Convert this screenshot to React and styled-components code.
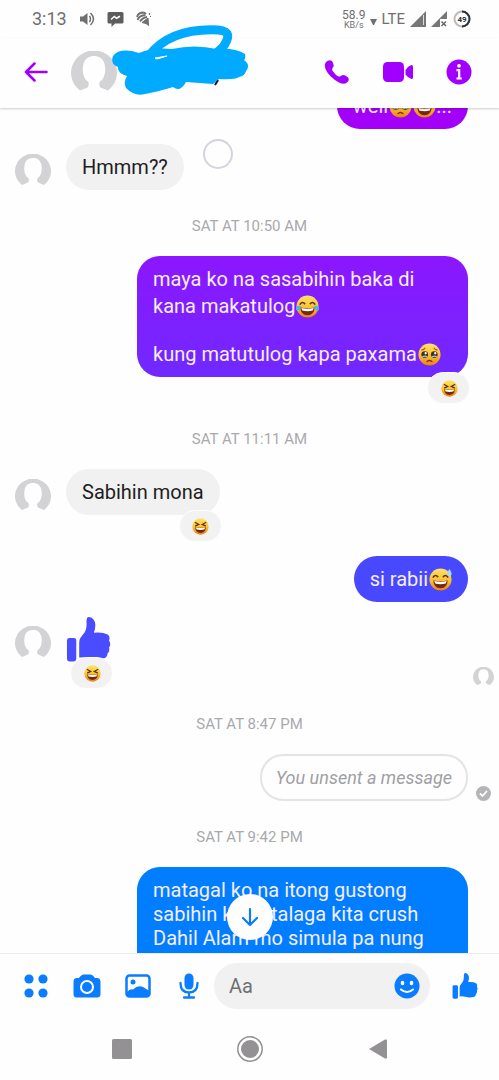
import styled, { createGlobalStyle } from "styled-components";

const GlobalStyle = createGlobalStyle`
  * {
    box-sizing: border-box;
  }

  body {
    margin: 0;
    background: #fefefe;
    font-family: Roboto, "Liberation Sans", sans-serif;
  }

  svg {
    display: block;
    flex-shrink: 0;
  }
`;

const Screen = styled.div`
  position: relative;
  display: flex;
  flex-direction: column;
  height: 100vh;
  overflow: hidden;
  background: #fefefe;
`;

const StatusBar = styled.div`
  display: flex;
  align-items: center;
  justify-content: space-between;
  height: 38px;
  padding: 0 28px 0 32px;
  color: #707070;
`;

const StatusGroup = styled.div`
  display: flex;
  align-items: center;
  gap: ${({ $gap }) => $gap}px;
`;

const Clock = styled.span`
  font-size: 18px;
  line-height: 20px;
`;

const Network = styled.span`
  font-size: 15px;
  line-height: 20px;
`;

const Speed = styled.div`
  display: flex;
  flex-direction: column;
  align-items: center;
  font-size: 12px;
  line-height: 12px;
`;

const SpeedUnit = styled.span`
  font-size: 9px;
  line-height: 8px;
`;

const Header = styled.header`
  position: relative;
  z-index: 2;
  display: flex;
  align-items: center;
  height: 70px;
  padding: 0 10px 2px;
  color: #a100ff;
  background: #fefefe;
  box-shadow: 0 1px 2px rgba(0, 0, 0, 0.2);
`;

const HeaderAvatar = styled.div`
  flex: 1;
  padding: 4px 0 0 10px;
`;

const IconButton = styled.button`
  display: flex;
  align-items: center;
  justify-content: center;
  width: ${({ $width }) => $width}px;
  height: 46px;
  padding: 0;
  border: 0;
  color: inherit;
  background: none;
  cursor: pointer;
`;

const Scribble = styled.svg`
  position: absolute;
  top: -14px;
  left: 111px;
`;

const Chat = styled.main`
  position: relative;
  flex: 1;
  min-height: 0;
  overflow: hidden;
`;

const Thread = styled.div`
  display: flex;
  flex-direction: column;
  gap: 15px;
  margin-top: -25px;
`;

const Group = styled.section`
  display: flex;
  flex-direction: column;
  gap: 15px;
`;

const DateLine = styled.time`
  padding: 11px 0 5px;
  color: #a9a9ac;
  font-size: 15px;
  line-height: 20px;
  text-align: center;
`;

const Row = styled.div`
  position: relative;
  display: flex;
  align-items: flex-end;
  justify-content: ${({ $mine }) => ($mine ? "flex-end" : "flex-start")};
  gap: 15px;
  padding: 0 31px ${({ $reacted }) => ($reacted ? 26 : 0)}px 15px;
`;

const Content = styled.div`
  position: relative;
  max-width: 331px;
`;

const Bubble = styled.div`
  padding: 11px 16px;
  border-radius: 23px;
  color: ${({ $fill }) => ($fill ? "#f6edff" : "#1e1e1e")};
  background: ${({ $fill }) => $fill || "#f1f1f1"};
  font-size: 20px;
  line-height: 24px;
  white-space: pre-line;
`;

const LongBubble = styled(Bubble)`
  min-height: 120px;
`;

const UnsentBubble = styled(Bubble)`
  border: 2px solid #e4e4e4;
  padding: 10px 14px;
  color: #a0a0a3;
  background: none;
  font-size: 18px;
  line-height: 23px;
  font-style: italic;
`;

const EmojiSvg = styled.svg`
  display: inline-block;
  margin: ${({ $tall }) => ($tall ? 4 : 0)}px 0 0 1px;
  vertical-align: -5px;
`;

const Reaction = styled.div`
  position: absolute;
  right: -2px;
  bottom: -27px;
  display: flex;
  align-items: center;
  justify-content: center;
  width: 43px;
  height: 32px;
  border: 1px solid #fefefe;
  border-radius: 16px;
  background: #f2f2f2;
`;

const Receipt = styled.div`
  position: absolute;
  right: ${({ $right }) => $right}px;
  bottom: 0;
`;

const ScrollButton = styled.button`
  position: absolute;
  bottom: 13px;
  left: 50%;
  display: flex;
  align-items: center;
  justify-content: center;
  width: 46px;
  height: 46px;
  padding: 0;
  border: 0;
  border-radius: 50%;
  color: #0a7cf5;
  background: #fefefe;
  transform: translateX(-50%);
`;

const TouchRing = styled.div`
  position: absolute;
  top: 31px;
  left: 203px;
  width: 30px;
  height: 30px;
  border: 2px solid #d3d3e2;
  border-radius: 50%;
`;

const Composer = styled.form`
  display: flex;
  align-items: center;
  padding: 9px 0 11px 10px;
  border-top: 1px solid #ececec;
  color: #0a7cff;
`;

const Field = styled.label`
  display: flex;
  flex: 1;
  align-items: center;
  min-width: 0;
  height: 46px;
  border-radius: 23px;
  background: #f1f1f2;
`;

const TextInput = styled.input`
  flex: 1;
  min-width: 0;
  padding: 0 0 0 15px;
  border: 0;
  outline: 0;
  color: #1e1e1e;
  background: none;
  font: 20px Roboto, sans-serif;

  &::placeholder {
    color: #707072;
    opacity: 1;
  }
`;

const SystemNav = styled.nav`
  display: grid;
  grid-template-columns: repeat(3, 128px);
  justify-content: center;
  padding: 6px 0 8px;
  color: #939193;
`;

const PersonIcon = ({ size = 36 }) => (
  <svg width={size} height={size} viewBox="0 0 36 36" fill="#d3d3d5">
    <path d="M7 31A18 17.500 0 1 1 29 31L23 28.500Q20.500 24.500 24.500 22.500C27 19 27.200 14 26.200 10C25 5.500 21.500 4 18 4C14.500 4 11 5.500 9.800 10C8.800 14 9 19 11.500 22.500Q15.500 24.500 13 28.500Z" />
  </svg>
);

const ThumbIcon = ({ size = 45, fill = "currentColor" }) => (
  <svg width={size} height={size} viewBox="0 0 45 46" fill={fill}>
    <rect x="0.500" y="21.500" width="9.500" height="24" rx="2.500" />
    <path d="M13 26Q13 22 16 19Q21 14 20.500 6Q20 0 23 0Q29 1 29.500 8Q29.500 13 28 16Q37 15 42 18Q45 20 43.500 24Q46 28 43.500 31Q44.500 35 42 37Q42 41 38 42.500Q30 44 23 42Q18 41 13 41.500Z" />
  </svg>
);

// Round faces used both inline in messages and in reaction pills.
const Emoji = ({ kind, size = 23, tall }) => {
  const id = `face-${kind}`;
  return (
    <EmojiSvg $tall={tall} width={size} height={size} viewBox="0 0 24 24" role="img" aria-label={kind}>
      <defs>
        <linearGradient id={id} x1="0" y1="0" x2="0" y2="1">
          <stop offset="0" stopColor="#ffe36b" />
          <stop offset="0.55" stopColor="#fbc02f" />
          <stop offset="1" stopColor="#ec7d17" />
        </linearGradient>
      </defs>
      <circle cx="12" cy="12" r="11.500" fill={`url(#${id})`} />
      {kind === "pleading" && (
        <>
          <path d="M3.500 7.500Q6 7 7.500 5M20.500 7.500Q18 7 16.500 5" fill="none" stroke="#a35b18" strokeWidth="1.200" />
          <circle cx="7" cy="12" r="3.500" fill="#3c3028" />
          <circle cx="17" cy="12" r="3.500" fill="#3c3028" />
          <path d="M4.500 14.500Q7 13 9.500 14.500M14.500 14.500Q17 13 19.500 14.500" fill="none" stroke="#a8c7d4" strokeWidth="1.300" />
          <circle cx="8" cy="10.700" r="1.200" fill="#fff" />
          <circle cx="18" cy="10.700" r="1.200" fill="#fff" />
          <path d="M9 19.500Q12 16.800 15 19.500" fill="none" stroke="#74340c" strokeWidth="1.500" />
        </>
      )}
      {kind !== "pleading" && (
        <>
          {kind === "squint" ? (
            <path d="M4 6L9.500 9L4.500 11.500M20 6L14.500 9L19.500 11.500" fill="none" stroke="#5b3412" strokeWidth="1.700" />
          ) : (
            <path d="M4 10Q6.500 6 9.500 9.500M14.500 9.500Q17.500 6 20 10" fill="none" stroke="#5b3412" strokeWidth="1.700" />
          )}
          <path d="M4.500 13Q12 14.500 19.500 13Q19 21 12 21Q5 21 4.500 13Z" fill="#74290f" />
          <path d="M5.500 13.500Q12 15 18.500 13.500L17.500 16.300Q12 17.500 6.500 16.300Z" fill="#fff" />
        </>
      )}
      {kind === "joy" && (
        <path d="M5 11Q-1 11 0 15Q2 18 4.500 14ZM19 11Q25 11 24 15Q22 18 19.500 14Z" fill="#49b5ed" />
      )}
      {kind === "sweat" && (
        <path d="M21.500 1Q18 5 19 7Q21 9.500 23.500 7Q24 5 21.500 1Z" fill="#9fdcff" />
      )}
    </EmojiSvg>
  );
};

const StatusIcons = () => (
  <>
    <svg width="16" height="16" viewBox="0 0 16 16" fill="#707070">
      <path d="M1 5.500H4L8.500 2V14L4 10.500H1Z" />
      <path d="M10.500 5Q12.500 8 10.500 11M11.500 2Q17.500 8 11.500 14" fill="none" stroke="#707070" strokeWidth="1.500" />
    </svg>
    <svg width="17" height="17" viewBox="0 0 17 17">
      <path d="M2 1H15Q16.500 1 16.500 2.500V11Q16.500 12.500 15 12.500H8L4.500 16V12.500H2Q.5 12.500.5 11V2.500Q.5 1 2 1Z" fill="#5d5d5d" />
      <path d="M4 8.500L7.300 5.500L9.500 7.300L13 5.200" fill="none" stroke="#fff" strokeWidth="1.600" />
    </svg>
    <svg width="16" height="16" viewBox="0 0 16 16" fill="none" stroke="#707070">
      <path d="M1 6Q2 2 6.500 1.500Q9 1.500 10 3M1.500 9Q3 4.500 9.500 4M4 10.500Q6 7 11 6" strokeWidth="1.800" />
      <path d="M6 11.500L12 7L12.500 14.500L10 12.500Z" fill="#707070" />
      <path d="M13.500 2V4M14 5.500H15" strokeWidth="1.200" />
    </svg>
  </>
);

const App = () => (
  <Screen>
    <GlobalStyle />
    <StatusBar>
      <StatusGroup $gap={12}>
        <StatusGroup $gap={12}>
          <Clock>3:13</Clock>
        </StatusGroup>
        <StatusIcons />
      </StatusGroup>
      <StatusGroup $gap={5}>
        <Speed>
          <span>58.9</span>
          <SpeedUnit>KB/s</SpeedUnit>
        </Speed>
        <StatusGroup $gap={4}>
          <svg width="7" height="14" viewBox="0 0 7 14" fill="#707070">
            <path d="M0 7H7L4 13H3Z" />
          </svg>
          <Network>LTE</Network>
        </StatusGroup>
        <svg width="16" height="16" viewBox="0 0 16 16" fill="#777">
          <path d="M0 16L16 0V16Z" />
          <path d="M13.500 4V14" stroke="#ddd" />
        </svg>
        <svg width="17" height="16" viewBox="0 0 17 16" fill="#777">
          <path d="M0 16L16 0V8H9V16Z" />
          <path d="M10.500 10.500L15 15M15 10.500L10.500 15" stroke="#666" strokeWidth="1.500" />
        </svg>
        <svg width="18" height="18" viewBox="0 0 18 18">
          <circle cx="9" cy="9" r="7.500" fill="none" stroke="#bbb" strokeWidth="2" />
          <path d="M9 1.500A7.500 7.500 0 0 1 9 16.500" fill="none" stroke="#333" strokeWidth="2" />
          <text x="9" y="12" fill="#333" fontSize="8" fontWeight="700" textAnchor="middle">49</text>
        </svg>
      </StatusGroup>
    </StatusBar>

    <Header>
      <IconButton type="button" aria-label="Back" $width={51}>
        <svg width="24" height="20" viewBox="0 0 24 20" fill="none" stroke="currentColor" strokeWidth="2.500" strokeLinecap="round" strokeLinejoin="round">
          <path d="M22.500 10H2M10.500 1.500L2 10L10.500 18.500" />
        </svg>
      </IconButton>
      <HeaderAvatar>
        <PersonIcon size={46} />
      </HeaderAvatar>
      <IconButton type="button" aria-label="Voice call" $width={61}>
        <svg width="26" height="26" viewBox="0 0 26 26" fill="currentColor">
          <path d="M2 3Q5 0 8 2Q11 7 8.500 9Q7.500 11 9 12.500Q11.500 16 14.500 17.500Q16 18 17.500 16.500Q20 15 24 18.500Q26 21 23 23.500Q20 26 15 23.500Q5 18 1.500 10Q0 5.500 2 3Z" />
        </svg>
      </IconButton>
      <IconButton type="button" aria-label="Video call" $width={61}>
        <svg width="30" height="20" viewBox="0 0 30 20" fill="currentColor">
          <rect width="21" height="20" rx="4.500" />
          <path d="M22.500 8Q25 4 28.500 3Q30 3 30 4.500V15.500Q30 17 28.500 17Q25 16 22.500 12.500Z" />
        </svg>
      </IconButton>
      <IconButton type="button" aria-label="Details" $width={61}>
        <svg width="26" height="26" viewBox="0 0 26 26">
          <circle cx="13" cy="13" r="12.500" fill="currentColor" />
          <circle cx="13" cy="6.800" r="1.900" fill="#fff" />
          <path d="M10.500 11.200H13.200V19M10.500 19.500H15.800" fill="none" stroke="#fff" strokeWidth="2.200" />
        </svg>
      </IconButton>
      <Scribble width="138" height="74" viewBox="0 0 138 74">
        <path d="M104 61L107 56" stroke="#111" strokeWidth="2" />
        <path d="M38 32C55 9 84 5 107 6C119 7 119 13 112 23L102 32" fill="none" stroke="#00aaff" strokeWidth="9" />
        <path d="M2 32Q9 23 28 29Q42 23 61 25Q83 20 106 25Q125 24 134 30Q135 34 133 36Q140 41 135 47Q134 52 128 53Q124 56 108 55L102 60L75 58Q69 69 62 63Q46 68 34 70Q24 73 15 64Q12 58 16 52Q6 49 7 43Q-1 40 2 32Z" fill="#00aaff" />
        <path d="M44 34L56 32L46 35Z" stroke="#fff" strokeWidth="1" fill="#fff" />
      </Scribble>
    </Header>

    <Chat>
      <Thread>
        <Group>
          <Row $mine>
            <Content>
              <Bubble $fill="#a300fa">
                well
                <Emoji kind="pleading" />
                <Emoji kind="sweat" />
                ...
              </Bubble>
            </Content>
          </Row>
          <Row>
            <PersonIcon />
            <Content>
              <Bubble>Hmmm??</Bubble>
            </Content>
          </Row>
        </Group>

        <Group>
          <DateLine>SAT AT 10:50 AM</DateLine>
          <Row $mine $reacted>
            <Content>
              <Bubble $fill="linear-gradient(#8c16ff, #7029ff)">
                maya ko na sasabihin baka di kana makatulog
                <Emoji kind="joy" tall />
                {"\n\n"}
                kung matutulog kapa paxama
                <Emoji kind="pleading" />
              </Bubble>
              <Reaction>
                <Emoji kind="squint" size={17} />
              </Reaction>
            </Content>
          </Row>
        </Group>

        <Group>
          <DateLine>SAT AT 11:11 AM</DateLine>
          <Row $reacted>
            <PersonIcon />
            <Content>
              <Bubble>Sabihin mona</Bubble>
              <Reaction>
                <Emoji kind="squint" size={17} />
              </Reaction>
            </Content>
          </Row>
          <Row $mine>
            <Content>
              <Bubble $fill="#4848ff">
                si rabii
                <Emoji kind="sweat" />
              </Bubble>
            </Content>
          </Row>
          <Row $reacted>
            <PersonIcon />
            <Content>
              <ThumbIcon fill="#4a4cff" />
              <Reaction>
                <Emoji kind="squint" size={17} />
              </Reaction>
            </Content>
            <Receipt $right={5}>
              <PersonIcon size={21} />
            </Receipt>
          </Row>
        </Group>

        <Group>
          <DateLine>SAT AT 8:47 PM</DateLine>
          <Row $mine>
            <Content>
              <UnsentBubble>You unsent a message</UnsentBubble>
            </Content>
            <Receipt $right={8}>
              <svg width="15" height="15" viewBox="0 0 15 15">
                <circle cx="7.500" cy="7.500" r="7.500" fill="#b5b5b7" />
                <path d="M4 7.500L6.500 10L11 5" fill="none" stroke="#fff" strokeWidth="1.800" />
              </svg>
            </Receipt>
          </Row>
        </Group>

        <Group>
          <DateLine>SAT AT 9:42 PM</DateLine>
          <Row $mine>
            <Content>
              <LongBubble $fill="#007eff">
                matagal ko na itong gustong sabihin kong talaga kita crush Dahil Alam mo simula pa nung
              </LongBubble>
            </Content>
          </Row>
        </Group>
      </Thread>
      <TouchRing />
      <ScrollButton type="button" aria-label="Scroll to latest">
        <svg width="18" height="20" viewBox="0 0 18 20" fill="none" stroke="currentColor" strokeWidth="2.200" strokeLinecap="round" strokeLinejoin="round">
          <path d="M9 2V18M2 11L9 18L16 11" />
        </svg>
      </ScrollButton>
    </Chat>

    <Composer onSubmit={(e) => e.preventDefault()}>
      <IconButton type="button" aria-label="More" $width={51}>
        <svg width="24" height="24" viewBox="0 0 24 24" fill="currentColor">
          <circle cx="5" cy="5" r="4.600" />
          <circle cx="19" cy="5" r="4.600" />
          <circle cx="5" cy="19" r="4.600" />
          <circle cx="19" cy="19" r="4.600" />
        </svg>
      </IconButton>
      <IconButton type="button" aria-label="Camera" $width={51}>
        <svg width="28" height="24" viewBox="0 0 28 24" fill="currentColor">
          <path d="M4 4H6Q8.500 0.500 10.500 0.500H17.500Q19.500 0.500 22 4H24Q27.500 4 27.500 8V20Q27.500 23.500 24 23.500H4Q.5 23.500.5 20V8Q.5 4 4 4Z" />
          <circle cx="14" cy="13" r="6" fill="currentColor" stroke="#fff" strokeWidth="2" />
        </svg>
      </IconButton>
      <IconButton type="button" aria-label="Gallery" $width={51}>
        <svg width="26" height="24" viewBox="0 0 26 24">
          <rect x="1.500" y="1.500" width="23" height="21" rx="3" fill="none" stroke="currentColor" strokeWidth="2.500" />
          <circle cx="8" cy="8" r="2.500" fill="currentColor" />
          <path d="M2 18Q5 14.500 8 15.500Q13 10.500 18 13L24.500 17V21Q24 23 22 23H4Q2 23 2 21Z" fill="currentColor" />
        </svg>
      </IconButton>
      <IconButton type="button" aria-label="Voice message" $width={51}>
        <svg width="20" height="26" viewBox="0 0 20 26">
          <rect x="5.500" y="0.500" width="9" height="16" rx="4.500" fill="currentColor" />
          <path d="M1.500 10Q1.500 19.500 10 19.500Q18.500 19.500 18.500 10M10 20V24M5 24.500H15" fill="none" stroke="currentColor" strokeWidth="2.300" strokeLinecap="round" />
        </svg>
      </IconButton>
      <Field>
        <TextInput type="text" placeholder="Aa" aria-label="Message" />
        <IconButton type="button" aria-label="Emoji" $width={46}>
          <svg width="26" height="26" viewBox="0 0 26 26">
            <circle cx="13" cy="13" r="12.500" fill="currentColor" />
            <ellipse cx="8.500" cy="10" rx="1.800" ry="2.300" fill="#fff" />
            <ellipse cx="17.500" cy="10" rx="1.800" ry="2.300" fill="#fff" />
            <path d="M7 16.500Q13 21.500 19 16.500" fill="none" stroke="#fff" strokeWidth="2" strokeLinecap="round" />
          </svg>
        </IconButton>
      </Field>
      <IconButton type="button" aria-label="Send like" $width={69}>
        <ThumbIcon size={26} />
      </IconButton>
    </Composer>

    <SystemNav>
      <IconButton type="button" aria-label="Recent apps" $width={128}>
        <svg width="20" height="20" viewBox="0 0 20 20" fill="currentColor">
          <rect width="20" height="20" rx="1.500" />
        </svg>
      </IconButton>
      <IconButton type="button" aria-label="Home" $width={128}>
        <svg width="26" height="26" viewBox="0 0 26 26" fill="currentColor">
          <circle cx="13" cy="13" r="12.200" fill="none" stroke="currentColor" strokeWidth="1.500" />
          <circle cx="13" cy="13" r="9" />
        </svg>
      </IconButton>
      <IconButton type="button" aria-label="Previous screen" $width={128}>
        <svg width="18" height="20" viewBox="0 0 18 20" fill="currentColor">
          <path d="M0 10L16 0.500Q18 0 18 1.500V18.500Q18 20 16 19.500Z" />
        </svg>
      </IconButton>
    </SystemNav>
  </Screen>
);

export default App;
